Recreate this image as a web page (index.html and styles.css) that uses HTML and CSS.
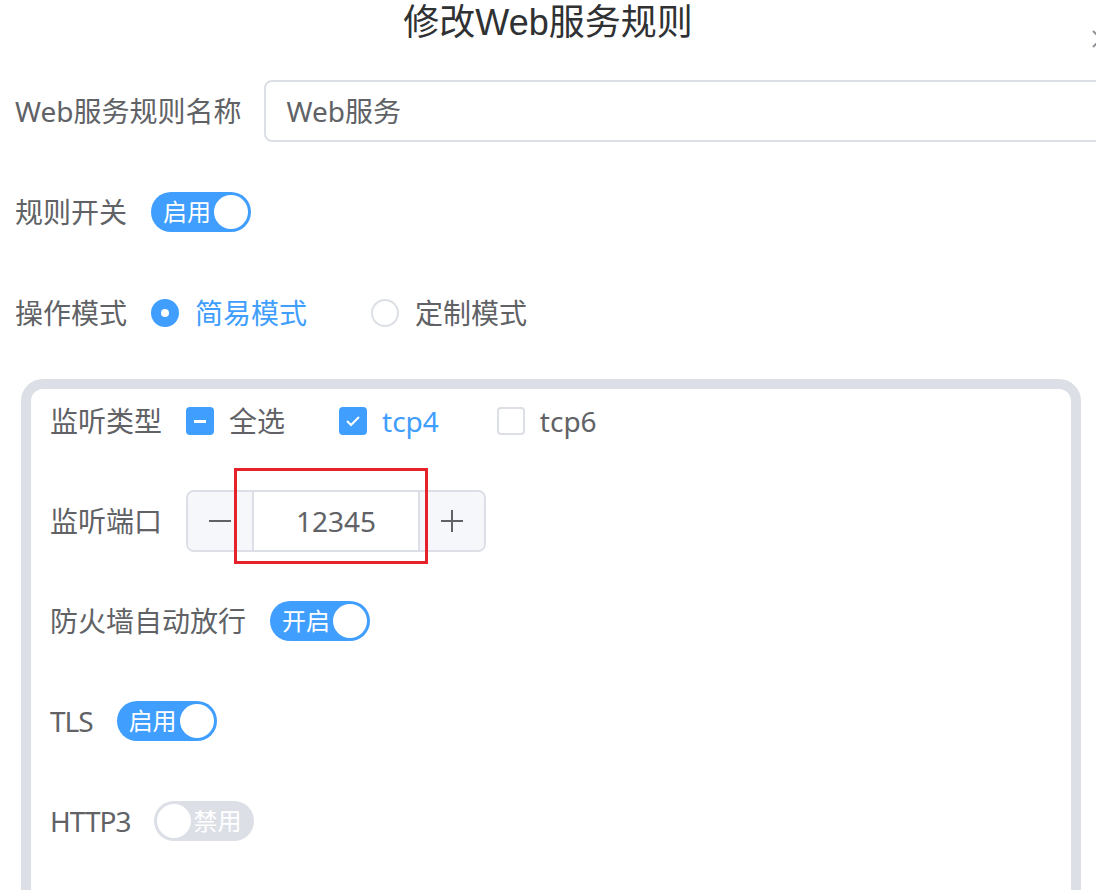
FILE: index.html
```html
<!DOCTYPE html>
<html lang="zh-CN">
<head>
<meta charset="utf-8">
<title>修改Web服务规则</title>
<link rel="stylesheet" href="styles.css">
</head>
<body>
<div class="dialog">
  <header class="dlg-header">
    <span class="title">修改Web服务规则</span>
    <svg class="close" width="18" height="18" viewBox="0 0 18 18"><path d="M1 1 L17 17 M17 1 L1 17" stroke="#909399" stroke-width="2" fill="none"/></svg>
  </header>

  <div class="form">
    <div class="item item-first">
      <span class="lbl">Web服务规则名称</span>
      <div class="input wide"><span>Web服务</span></div>
    </div>

    <div class="item">
      <span class="lbl">规则开关</span>
      <span class="switch on"><span class="sw-text">启用</span><span class="knob"></span></span>
    </div>

    <div class="item item-last">
      <span class="lbl">操作模式</span>
      <span class="radio checked"><span class="radio-dot"></span><span class="radio-label">简易模式</span></span>
      <span class="radio"><span class="radio-dot"></span><span class="radio-label">定制模式</span></span>
    </div>

    <div class="panel">
      <div class="item">
        <span class="lbl">监听类型</span>
        <span class="checkbox indeterminate"><span class="cb-box"><span class="cb-minus"></span></span><span class="cb-label">全选</span></span>
        <span class="checkbox checked"><span class="cb-box"><svg width="16" height="12" viewBox="0 0 16 12"><path d="M2 6 L6 10 L14 2" stroke="#fff" stroke-width="2" fill="none"/></svg></span><span class="cb-label">tcp4</span></span>
        <span class="checkbox"><span class="cb-box"></span><span class="cb-label">tcp6</span></span>
      </div>

      <div class="item">
        <span class="lbl">监听端口</span>
        <div class="input-number">
          <span class="in-btn minus"><span class="hbar"></span></span>
          <span class="in-value">12345</span>
          <span class="in-btn plus"><span class="hbar"></span><span class="vbar"></span></span>
          <span class="annot"></span>
        </div>
      </div>

      <div class="item">
        <span class="lbl">防火墙自动放行</span>
        <span class="switch on"><span class="sw-text">开启</span><span class="knob"></span></span>
      </div>

      <div class="item">
        <span class="lbl lbl-tls">TLS</span>
        <span class="switch on"><span class="sw-text">启用</span><span class="knob"></span></span>
      </div>

      <div class="item">
        <span class="lbl lbl-http3">HTTP3</span>
        <span class="switch off"><span class="knob"></span><span class="sw-text">禁用</span></span>
      </div>

      <div class="item">
        <span class="lbl lbl-fixed"></span>
        <div class="input short"></div>
      </div>
    </div>
  </div>
</div>
</body>
</html>
```

FILE: styles.css
```css
html, body {
  margin: 0;
  padding: 0;
  background: #ffffff;
  overflow: hidden;
  height: 890px;
}

body {
  font-family: "Noto Sans", "Noto Sans CJK SC", sans-serif;
  color: #606266;
}

.dialog {
  position: relative;
  width: 1096px;
  height: 890px;
  overflow: hidden;
}

.dlg-header {
  box-sizing: border-box;
  height: 44px;
  padding-top: 3px;
  line-height: 40px;
  text-align: center;
  font-size: 36px;
  color: #303133;
  font-family: "Liberation Sans", "Noto Sans CJK SC", sans-serif;
}

.close {
  position: absolute;
  left: 1092px;
  top: 30px;
}

.form {
  padding: 36px 0 0 15px;
}

.item {
  display: flex;
  align-items: center;
  height: 62px;
  margin-bottom: 39px;
  gap: 24px;
  font-size: 28px;
  line-height: 40px;
  white-space: nowrap;
}

.item-first {
  gap: 22px;
}

.item-last {
  margin-bottom: 35px;
}

.lbl {
  color: #606266;
}

.lbl-tls,
.lbl-http3 {
  letter-spacing: -1px;
}

.lbl-fixed {
  width: 215px;
  height: 40px;
}

.input {
  box-sizing: border-box;
  height: 62px;
  border: 2px solid #dcdfe6;
  border-radius: 8px;
  padding: 0 21px;
  display: flex;
  align-items: center;
  color: #606266;
  font-size: 28px;
}

.input.wide {
  width: 900px;
  flex: none;
}

.input.short {
  width: 252px;
  flex: none;
}

/* switch */
.switch {
  box-sizing: border-box;
  display: inline-flex;
  align-items: center;
  width: 100px;
  height: 40px;
  border-radius: 20px;
  font-size: 24px;
  line-height: 34px;
  color: #ffffff;
}

.switch.on {
  background: #409eff;
  padding: 0 3px 0 12px;
  justify-content: space-between;
}

.switch.off {
  background: #dcdfe6;
  padding: 0 13px 0 3px;
  justify-content: space-between;
}

.knob {
  width: 34px;
  height: 34px;
  border-radius: 50%;
  background: #ffffff;
  flex: none;
}

/* radio */
.radio {
  display: inline-flex;
  align-items: center;
  margin-right: 40px;
}

.radio-dot {
  box-sizing: border-box;
  width: 28px;
  height: 28px;
  border-radius: 50%;
  border: 2px solid #dcdfe6;
  background: #fff;
  margin-right: 16px;
  display: inline-flex;
  align-items: center;
  justify-content: center;
}

.radio.checked .radio-dot {
  background: #409eff;
  border-color: #409eff;
}

.radio.checked .radio-dot::after {
  content: "";
  width: 8px;
  height: 8px;
  border-radius: 50%;
  background: #fff;
}

.radio.checked .radio-label {
  color: #409eff;
}

/* panel */
.panel {
  margin-left: 6px;
  width: 1060px;
  box-sizing: border-box;
  border: 10px solid #dcdfe6;
  border-radius: 22px;
  padding: 1px 0 0 19px;
  height: 600px;
}

.panel .item {
  margin-bottom: 38px;
}

/* checkbox */
.checkbox {
  display: inline-flex;
  align-items: center;
  margin-right: 30px;
}

.checkbox.checked {
  margin-right: 34px;
}

.cb-box {
  box-sizing: border-box;
  width: 28px;
  height: 28px;
  border-radius: 4px;
  border: 2px solid #dcdfe6;
  background: #ffffff;
  margin-right: 15px;
  display: inline-flex;
  align-items: center;
  justify-content: center;
}

.checkbox.checked .cb-box,
.checkbox.indeterminate .cb-box {
  background: #409eff;
  border-color: #409eff;
}

.cb-minus {
  width: 12px;
  height: 3px;
  background: #ffffff;
}

.checkbox.checked .cb-label {
  color: #409eff;
}

/* input number */
.input-number {
  position: relative;
  box-sizing: border-box;
  width: 300px;
  height: 62px;
  border: 2px solid #dcdfe6;
  border-radius: 8px;
  display: flex;
  background: #ffffff;
}

.in-btn {
  position: relative;
  width: 64px;
  flex: none;
  background: #f5f7fa;
  display: flex;
  align-items: center;
  justify-content: center;
}

.in-btn.minus {
  border-right: 2px solid #dcdfe6;
  border-radius: 6px 0 0 6px;
}

.in-btn.plus {
  border-left: 2px solid #dcdfe6;
  border-radius: 0 6px 6px 0;
}

.hbar {
  width: 22px;
  height: 2px;
  background: #606266;
}

.vbar {
  position: absolute;
  left: 50%;
  top: 50%;
  width: 2px;
  height: 22px;
  margin: -11px 0 0 -1px;
  background: #606266;
}

.in-value {
  flex: 1;
  text-align: center;
  line-height: 58px;
  font-size: 28px;
  color: #606266;
}

.annot {
  position: absolute;
  left: 46px;
  top: -24px;
  width: 194px;
  height: 96px;
  box-sizing: border-box;
  border: 3px solid #e5222c;
}
```
